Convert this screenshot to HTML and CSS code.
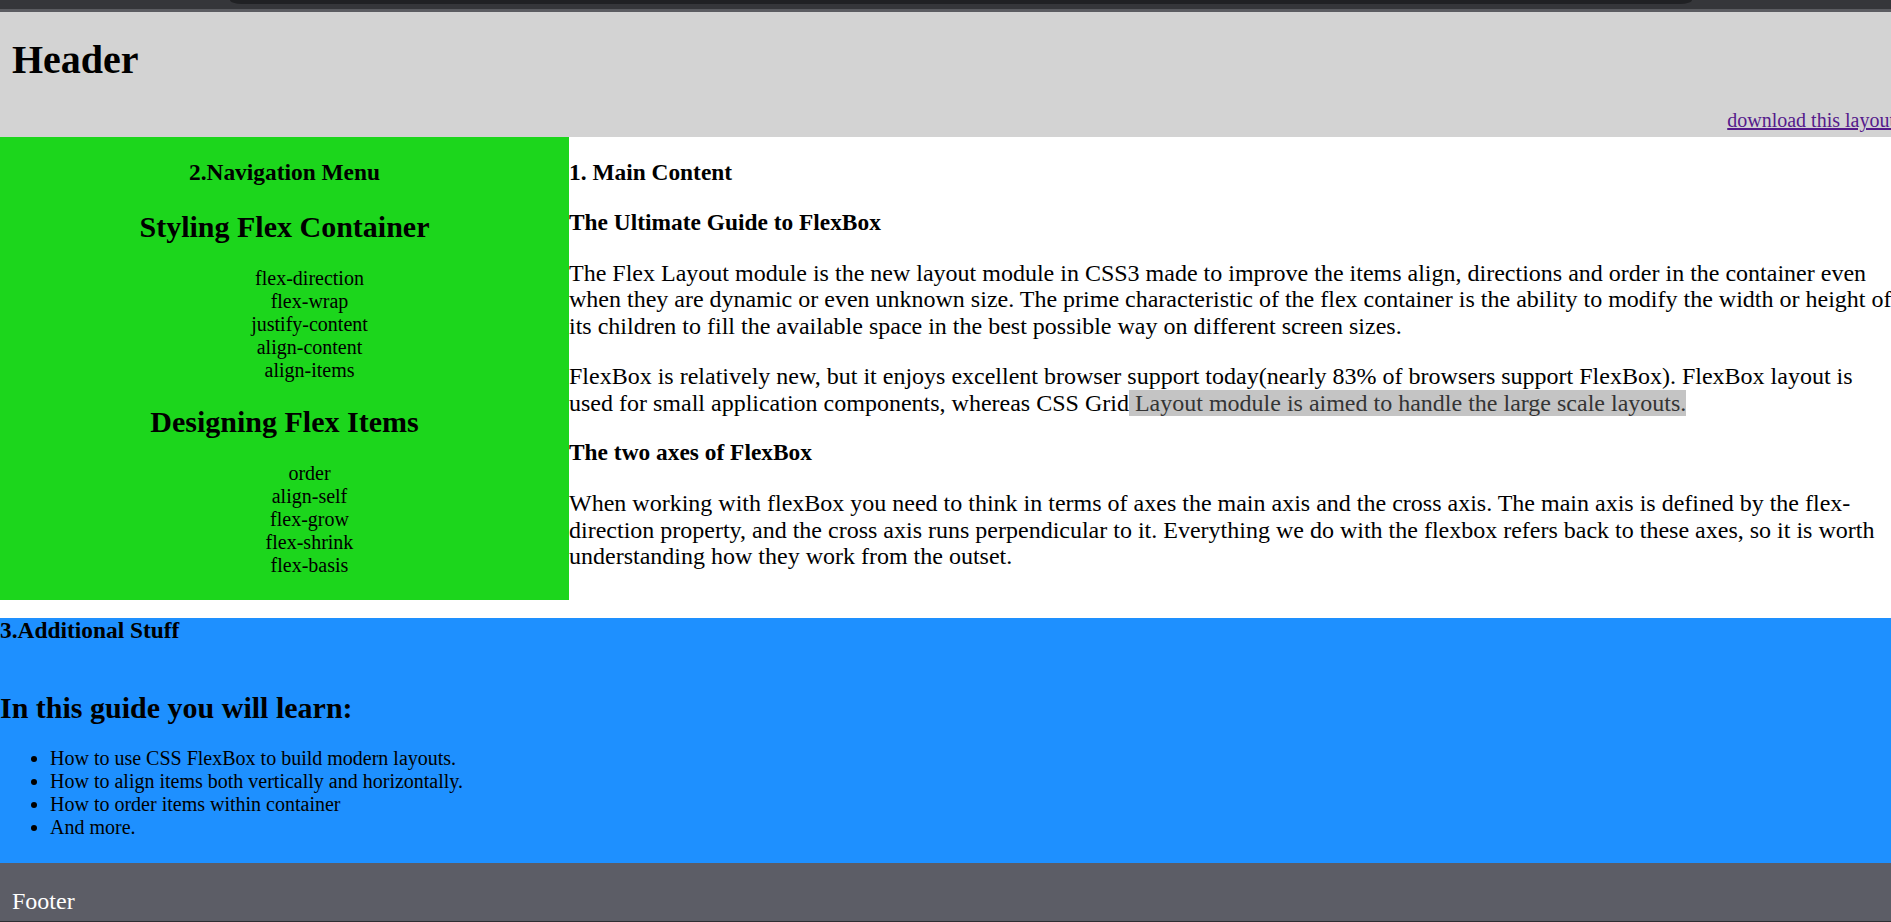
FILE: index.html
```html
<!DOCTYPE html>
<html lang="en">
<head>
<meta charset="utf-8">
<title>Flexbox Layout</title>
<link rel="stylesheet" href="styles.css">
</head>
<body>
<div class="browser-bar"><div class="browser-tab"></div></div>
<div class="page">
  <header class="site-header">
    <h1 class="site-title">Header</h1>
    <div class="header-link-row"><a class="download-link" href="#">download this layout</a></div>
  </header>
  <div class="content-row">
    <nav class="nav-panel">
      <h3 class="nav-title">2.Navigation Menu</h3>
      <h2 class="nav-heading">Styling Flex Container</h2>
      <ul class="nav-list">
        <li>flex-direction</li>
        <li>flex-wrap</li>
        <li>justify-content</li>
        <li>align-content</li>
        <li>align-items</li>
      </ul>
      <h2 class="nav-heading">Designing Flex Items</h2>
      <ul class="nav-list">
        <li>order</li>
        <li>align-self</li>
        <li>flex-grow</li>
        <li>flex-shrink</li>
        <li>flex-basis</li>
      </ul>
    </nav>
    <main class="main-panel">
      <h3 class="main-heading">1. Main Content</h3>
      <h3 class="main-heading">The Ultimate Guide to FlexBox</h3>
      <p class="main-text">The Flex Layout module is the new layout module in CSS3 made to improve the items align, directions and order in the container even when they are dynamic or even unknown size. The prime characteristic of the flex container is the ability to modify the width or height of its children to fill the available space in the best possible way on different screen sizes.</p>
      <p class="main-text">FlexBox is relatively new, but it enjoys excellent browser support today(nearly 83% of browsers support FlexBox). FlexBox layout is used for small application components, whereas CSS Grid<span class="selected-text"> Layout module is aimed to handle the large scale layouts.</span></p>
      <h3 class="main-heading">The two axes of FlexBox</h3>
      <p class="main-text">When working with flexBox you need to think in terms of axes the main axis and the cross axis. The main axis is defined by the flex-direction property, and the cross axis runs perpendicular to it. Everything we do with the flexbox refers back to these axes, so it is worth understanding how they work from the outset.</p>
    </main>
  </div>
  <section class="extra-panel">
    <h3 class="extra-title">3.Additional Stuff</h3>
    <h2 class="extra-heading">In this guide you will learn:</h2>
    <ul class="extra-list">
      <li>How to use CSS FlexBox to build modern layouts.</li>
      <li>How to align items both vertically and horizontally.</li>
      <li>How to order items within container</li>
      <li>And more.</li>
    </ul>
  </section>
  <footer class="site-footer">
    <p class="footer-text">Footer</p>
  </footer>
</div>
</body>
</html>
```

FILE: styles.css
```css
html, body {
  margin: 0;
  padding: 0;
  overflow: hidden;
  background: #ffffff;
}

body {
  font-family: "Liberation Serif", "Times New Roman", serif;
  font-size: 20px;
  color: #000000;
}

.browser-bar {
  height: 9px;
  background: #35363a;
  border-bottom: 3px solid #5b5c61;
  display: flex;
}

.browser-tab {
  margin-left: 230px;
  width: 1462px;
  height: 4px;
  background: #202124;
  border-radius: 0 0 12px 12px / 0 0 4px 4px;
}

.page {
  width: 1895px;
}

/* Header */
.site-header {
  background: #d3d3d3;
  padding: 0 0 6px 12px;
  overflow: hidden;
}

.site-title {
  font-size: 40px;
  line-height: 44.3px;
  font-weight: bold;
  margin: 26.4px 0 26.2px;
}

.header-link-row {
  text-align: right;
  line-height: 22.14px;
}

.download-link {
  color: #551a8b;
  text-decoration: underline;
}

/* Row */
.content-row {
  display: flex;
  align-items: stretch;
}

.nav-panel {
  width: 569px;
  flex: 0 0 569px;
  background: #1cd61c;
  text-align: center;
  padding-bottom: 23.5px;
}

.nav-title {
  font-size: 23.4px;
  line-height: 25.9px;
  font-weight: bold;
  margin: 23.4px 0 0;
}

.nav-heading {
  font-size: 30px;
  line-height: 33.2px;
  font-weight: bold;
  margin: 23.5px 0 0;
}

.nav-list {
  list-style: none;
  margin: 23.5px 0 0;
  padding: 0 0 0 50px;
  line-height: 23px;
}

.main-panel {
  flex: 1 1 auto;
  min-width: 0;
}

.main-heading {
  font-size: 23.4px;
  line-height: 25.9px;
  font-weight: bold;
  margin: 23.4px 0 0;
}

.main-text {
  font-size: 24px;
  line-height: 26.57px;
  margin: 24px 0;
}

.main-heading + .main-text {
  margin-top: 24px;
}

.main-text + .main-heading {
  margin-top: 0;
}

.selected-text {
  background: #c4c4c4;
  color: #343434;
}

/* Additional stuff */
.extra-panel {
  margin-top: 17.8px;
  background: #1e90ff;
  padding-bottom: 24px;
}

.extra-title {
  font-size: 23.4px;
  line-height: 25.9px;
  font-weight: bold;
  margin: 0;
}

.extra-heading {
  font-size: 30px;
  line-height: 33.2px;
  font-weight: bold;
  margin: 46.7px 0 0;
}

.extra-list {
  margin: 23px 0 0;
  padding-left: 50px;
  line-height: 23px;
}

/* Footer */
.site-footer {
  background: #5c5d66;
  color: #ffffff;
  padding: 0 0 6.3px 12px;
  border-bottom: 2px solid #2e2e33;
  overflow: hidden;
}

.footer-text {
  font-size: 24px;
  line-height: 26.57px;
  margin: 25.1px 0 0;
}
```
